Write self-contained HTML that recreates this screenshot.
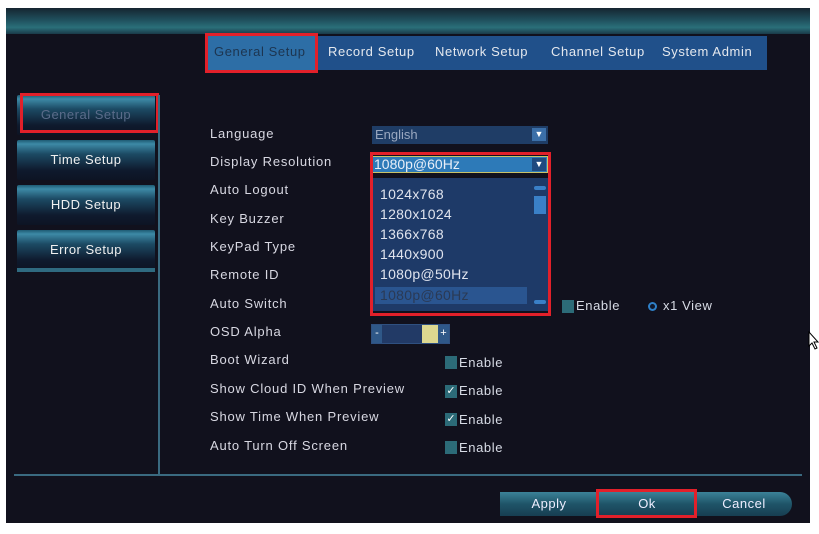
<!DOCTYPE html>
<html><head><meta charset="utf-8"><style>
*{margin:0;padding:0;box-sizing:border-box}
body{width:819px;height:534px;background:#fff;position:relative;overflow:hidden;font-family:"Liberation Sans","DejaVu Sans",sans-serif}
.scr{position:absolute;left:6px;top:8px;width:804px;height:515px;background:#11111d}
.a{position:absolute}
.top{left:6px;top:8px;width:804px;height:26px;background:linear-gradient(#152530 0%,#1f4f5c 45%,#2a6f7a 75%,#1a3a48 100%)}
.tabs{left:205px;top:36px;width:562px;height:34px;background:#20508a}
.tab{position:absolute;top:44px;font-size:13px;color:#e4e8ee;letter-spacing:.6px}
.red{position:absolute;border:3px solid #e2202a}
.mb{position:absolute;left:17px;width:138px;height:40px;background:linear-gradient(#1e5b73 0%,#3d8aa6 10%,#1c4a64 35%,#0f1a2e 75%,#0d1424 100%);color:#f0f0f0;font-size:13px;text-align:center;line-height:40px;letter-spacing:.5px;border-radius:2px}
.lb{position:absolute;left:210px;font-size:13px;color:#d8d8e2;letter-spacing:.8px}
.it{position:absolute;left:380px;font-size:14px;color:#e0e4ee;letter-spacing:.3px}
.cb{position:absolute;width:12px;height:13px;background:#2c6b78}
.en{position:absolute;font-size:13px;color:#d8dce6;letter-spacing:.6px}
.btn{position:absolute;top:492px;height:24px;width:98px;background:linear-gradient(#3b8298,#1f5468 50%,#173e52);color:#eef;font-size:13px;text-align:center;line-height:24px;letter-spacing:.5px}
</style></head><body>
<div class="scr"></div>
<div class="a top"></div>
<div class="a tabs"></div>
<div class="a" style="left:207px;top:36px;width:109px;height:34px;background:#2d6ea6"></div>
<div class="tab" style="left:214px;color:#1d3550">General Setup</div>
<div class="tab" style="left:328px">Record Setup</div>
<div class="tab" style="left:435px">Network Setup</div>
<div class="tab" style="left:551px">Channel Setup</div>
<div class="tab" style="left:662px">System Admin</div>
<div class="red" style="left:205px;top:33px;width:113px;height:40px"></div>

<div class="mb" style="top:95px;color:#5a6c8a">General Setup</div>
<div class="mb" style="top:140px">Time Setup</div>
<div class="mb" style="top:185px">HDD Setup</div>
<div class="mb" style="top:230px">Error Setup</div>
<div class="a" style="left:17px;top:268px;width:138px;height:4px;background:#2f6a80"></div>
<div class="red" style="left:20px;top:93px;width:139px;height:40px"></div>
<div class="a" style="left:158px;top:95px;width:2px;height:379px;background:#3a6a80"></div>
<div class="a" style="left:14px;top:474px;width:788px;height:2px;background:#3a6a80"></div>

<div class="lb" style="top:126px">Language</div>
<div class="lb" style="top:154px">Display Resolution</div>
<div class="lb" style="top:182px">Auto Logout</div>
<div class="lb" style="top:211px">Key Buzzer</div>
<div class="lb" style="top:239px">KeyPad Type</div>
<div class="lb" style="top:267px">Remote ID</div>
<div class="lb" style="top:296px">Auto Switch</div>
<div class="lb" style="top:324px">OSD Alpha</div>
<div class="lb" style="top:352px">Boot Wizard</div>
<div class="lb" style="top:381px">Show Cloud ID When Preview</div>
<div class="lb" style="top:409px">Show Time When Preview</div>
<div class="lb" style="top:438px">Auto Turn Off Screen</div>

<div class="a" style="left:372px;top:126px;width:176px;height:18px;background:#1f3d66"></div>
<div class="a" style="left:375px;top:127px;font-size:13px;color:#9aa8c0">English</div>
<div class="a" style="left:532px;top:128px;width:14px;height:13px;background:#3b6fa8;color:#fff;font-size:9px;text-align:center;line-height:13px">▼</div>

<div class="a" style="left:372px;top:156px;width:176px;height:17px;background:#2d7ab8;border:1px solid #c9c26a"></div>
<div class="a" style="left:374px;top:156px;font-size:14px;color:#e8eef8">1080p@60Hz</div>
<div class="a" style="left:532px;top:158px;width:14px;height:13px;background:#1f4a80;color:#fff;font-size:9px;text-align:center;line-height:13px">▼</div>
<div class="a" style="left:372px;top:178px;width:176px;height:133px;background:#1e3a68"></div>
<div class="a" style="left:375px;top:287px;width:152px;height:17px;background:#2a5590"></div>
<div class="it" style="top:186px">1024x768</div>
<div class="it" style="top:206px">1280x1024</div>
<div class="it" style="top:226px">1366x768</div>
<div class="it" style="top:246px">1440x900</div>
<div class="it" style="top:266px">1080p@50Hz</div>
<div class="it" style="top:287px;color:#2a3a55">1080p@60Hz</div>
<div class="a" style="left:534px;top:186px;width:12px;height:4px;background:#3a80c8;border-radius:2px"></div>
<div class="a" style="left:534px;top:196px;width:12px;height:18px;background:#3a80c8"></div>
<div class="a" style="left:534px;top:300px;width:12px;height:4px;background:#3a80c8;border-radius:2px"></div>
<div class="red" style="left:370px;top:152px;width:181px;height:164px"></div>

<div class="cb" style="left:562px;top:300px"></div>
<div class="en" style="left:576px;top:298px">Enable</div>
<div class="a" style="left:648px;top:302px;width:9px;height:9px;border-radius:50%;background:#2f80c8"></div>
<div class="a" style="left:650px;top:304px;width:5px;height:5px;border-radius:50%;background:#10182a"></div>
<div class="en" style="left:663px;top:298px">x1 View</div>

<div class="a" style="left:371px;top:324px;width:79px;height:20px;background:#223a66;border:1px solid #2f5080"></div>
<div class="a" style="left:372px;top:325px;width:10px;height:18px;background:#2f5888;color:#fff;font-size:11px;text-align:center;line-height:16px">-</div>
<div class="a" style="left:422px;top:325px;width:16px;height:18px;background:#dcd890"></div>
<div class="a" style="left:438px;top:325px;width:11px;height:18px;background:#2f5888;color:#fff;font-size:11px;text-align:center;line-height:16px">+</div>

<div class="cb" style="left:445px;top:356px"></div><div class="en" style="left:459px;top:355px">Enable</div>
<div class="cb" style="left:445px;top:385px;color:#fff;font-size:11px;line-height:13px;text-align:center">✓</div><div class="en" style="left:459px;top:383px">Enable</div>
<div class="cb" style="left:445px;top:413px;color:#fff;font-size:11px;line-height:13px;text-align:center">✓</div><div class="en" style="left:459px;top:412px">Enable</div>
<div class="cb" style="left:445px;top:441px"></div><div class="en" style="left:459px;top:440px">Enable</div>

<div class="btn" style="left:500px">Apply</div>
<div class="btn" style="left:598px">Ok</div>
<div class="btn" style="left:696px;width:96px;border-radius:0 12px 12px 0">Cancel</div>
<div class="red" style="left:596px;top:489px;width:101px;height:29px"></div>

<svg class="a" style="left:808px;top:331px" width="12" height="20" viewBox="0 0 12 20"><path d="M1 1 L1 15 L4 12 L7 18 L9 17 L6 11 L10 11 Z" fill="#fff" stroke="#000" stroke-width="1"/></svg>
</body></html>
